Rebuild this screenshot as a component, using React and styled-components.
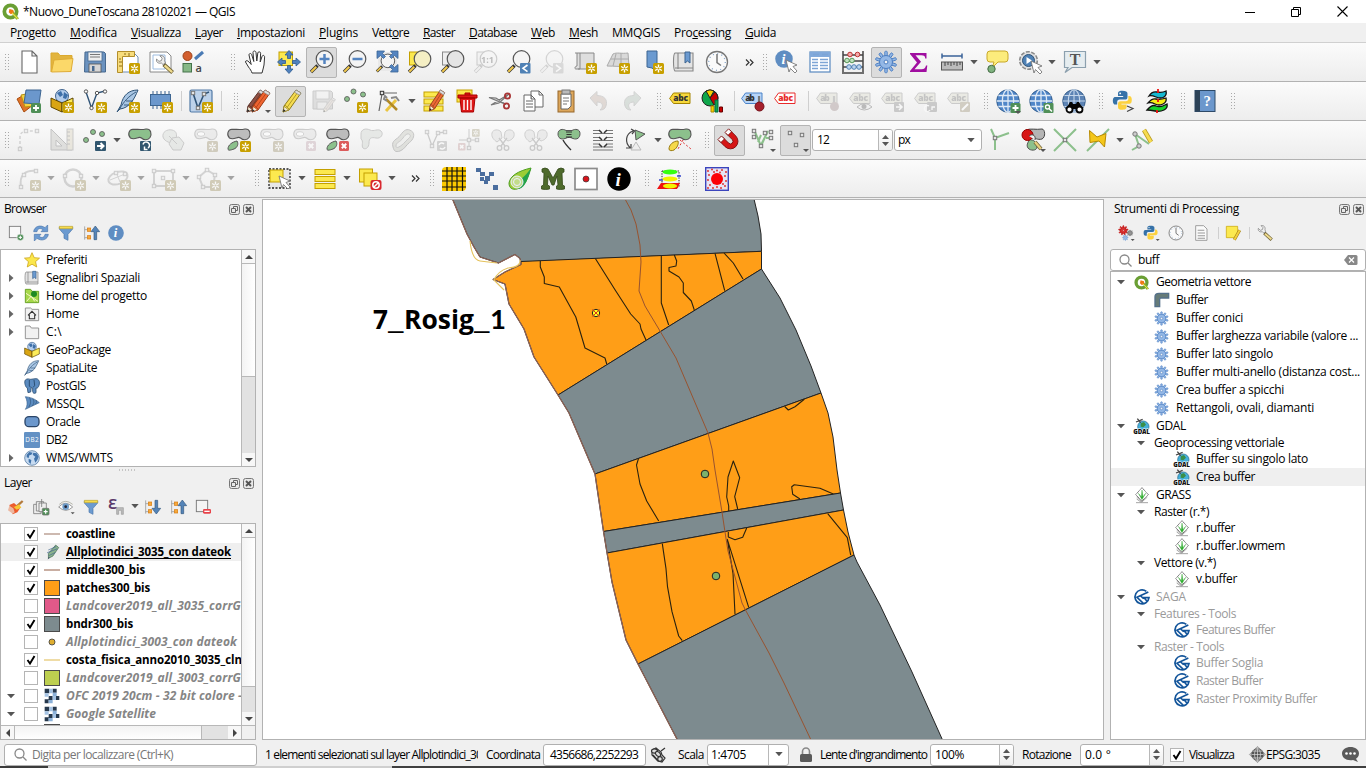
import React, { useLayoutEffect, useRef, useState } from "react";
import styled, { createGlobalStyle, css } from "styled-components";

const Global = createGlobalStyle`
  * { box-sizing: border-box; }
  html, body { margin: 0; padding: 0; }
  body { width: 1366px; height: 768px; overflow: hidden; background: #f0f0f0;
    font-family: "Open Sans", "Noto Sans", sans-serif; font-size: 12px; color: #000; }
  svg { display: block; overflow: visible; }
`;

/* ---------- text ---------- */
const Text = styled.span`
  display: inline-block; flex: none; white-space: pre; line-height: 16px;
  u { text-decoration: underline; text-underline-offset: 1px; text-decoration-thickness: 1px; }
`;
function Label({ w, children, className }) {
  const ref = useRef(null);
  const [gap, setGap] = useState(0);
  useLayoutEffect(() => {
    const el = ref.current;
    el.style.letterSpacing = "0px";
    const n = el.textContent.length;
    const next = w ? (w - el.getBoundingClientRect().width) / n : 0;
    el.style.letterSpacing = next + "px";
    setGap(next);
  }, [w]);
  return <Text ref={ref} className={className} style={{ letterSpacing: gap + "px" }}>{children}</Text>;
}

/* ---------- icon helpers ---------- */
const Ico = ({ s = 24, off, children }) => (
  <svg width={s} height={s} viewBox="0 0 24 24" opacity={off ? 0.45 : 1}>{children}</svg>
);
const Star = ({ x = 13, y = 13, c = "#c8a000" }) => (
  <g transform={`translate(${x} ${y})`}>
    <rect width="11" height="11" rx="1.5" fill={c} />
    <path d="M5.5 1.6v7.8M2.1 3.5l6.8 4M8.9 3.5l-6.8 4" stroke="#fff" strokeWidth="1.4" />
    <circle cx="5.5" cy="5.5" r="1.1" fill={c} />
  </g>
);
const Plus = ({ x = 13, y = 13 }) => (
  <g transform={`translate(${x} ${y})`}>
    <rect width="10" height="10" rx="1.5" fill="#4f8f57" />
    <path d="M5 2v6M2 5h6" stroke="#fff" strokeWidth="1.8" />
  </g>
);
const Del = ({ x = 13, y = 13, c = "#dc5c5c" }) => (
  <g transform={`translate(${x} ${y})`}>
    <rect width="10" height="10" rx="1.5" fill={c} />
    <path d="M2.8 2.8l4.4 4.4M7.2 2.8L2.8 7.2" stroke="#fff" strokeWidth="2" />
  </g>
);
const Pointer = ({ x = 12, y = 10 }) => (
  <path transform={`translate(${x} ${y})`} d="M0 0l11 5-4 1.5 4 4.5-2 2-4.5-4.5L3 12z" fill="#fff" stroke="#777" strokeWidth=".9" />
);
const Tri = ({ x = 18, y = 20 }) => <path d={`M${x} ${y}h6l-3 3z`} fill="#555" />;
const Lens = ({ c = "#f4f4f4", k = "#555" }) => (
  <g>
    <path d="M1 22l6.500-6.500" stroke={k === "#555" ? "#333" : k} strokeWidth="3.400" />
    <path d="M1.300 21.700l5-5" stroke={k === "#555" ? "#f2c94c" : "#eee"} strokeWidth="2" />
    <circle cx="14.500" cy="9" r="8.300" fill={c} stroke={k} strokeWidth="1.200" />
  </g>
);
const Gear = ({ c = "#4d7fc2", f = "#94b8e6", cx = 12, cy = 12, r = 6.5, n = 10 }) => (
  <g transform={`translate(${cx} ${cy})`}>
    {Array.from({ length: n }, (_, i) => (
      <rect key={i} x={-r * 0.19} y={-r * 1.65} width={r * 0.38} height={r * 0.85} rx=".8" fill={f} stroke={c} strokeWidth=".9" transform={`rotate(${(360 / n) * i})`} />
    ))}
    <circle r={r} fill={f} stroke={c} strokeWidth="1" />
    <circle r={r * 0.3} fill="#f4f4f4" stroke={c} strokeWidth="1" />
  </g>
);
const Globe = ({ r = 11, c = "#5c8ec4", f = "#bcd4ee", k = "#345", w = 1.1 }) => (
  <g fill="none" stroke={c} strokeWidth={w}>
    <circle cx="12" cy="12" r={r} fill={f} stroke={k} strokeWidth=".8" />
    <ellipse cx="12" cy="12" rx={r * 0.5} ry={r} />
    <path d={`M12 ${12 - r}v${2 * r}M${12 - r} 12h${2 * r}M${12 - r * 0.85} 6.500h${r * 1.7}M${12 - r * 0.85} 17.500h${r * 1.7}`} />
  </g>
);
const Earth = ({ r = 11 }) => (
  <g>
    <circle cx="12" cy="12" r={r} fill="#c7dbf1" stroke="#3d6591" strokeWidth="1" />
    <path d="M4 7l4-4 5 1-2 3-3 1-1 4-3-1zM14 4l5 1 3 5-2 5-3 4-2-6 2-3-4-3zM7 13l4 2-1 6-3-3z" fill="#4274ab" />
  </g>
);
const Pencil = ({ c = "#f6dc50", k = "#8d7a1a", t = "" }) => (
  <g transform={t}>
    <path d="M17 1l5 3L10 21l-6 2 1-6z" fill={c} stroke={k} strokeWidth="1" />
    <path d="M6 16l4 4M19 3L8 18.500" stroke={k} strokeWidth=".9" opacity=".75" />
    <path d="M17 1l5 3-1.500 2.200-5-3z" fill="#ddd" stroke="#888" strokeWidth=".7" />
    <path d="M4 23l1.200-5.600L9.500 21z" fill="#f3ead2" stroke={k} strokeWidth=".6" />
    <path d="M4 23l.5-3 2 1.800z" fill="#222" />
  </g>
);
const Tag = ({ f = "#f7d83b", k = "#a48300", tc = "#333", t = "abc" }) => (
  <g>
    <path d="M.6 9.500L4.500 4H21v10.500H4.500z" fill={f} stroke={k} strokeWidth="1" />
    <text x="4.200" y="12.400" fontFamily="Open Sans, sans-serif" fontWeight="800" fontSize="8.500" textLength={t === "abc" ? 15 : 9.5} fill={tc}>{t}</text>
  </g>
);
const blob = "M2.500 10C-.5 7 .5 1.500 5 1.200c5 0 8 1 13-.2 5-.5 6 5 4 8.500-2 3-6 2.800-8.500.5-3-2.500-6 2.800-11 0z";
const Blob = ({ f = "#8cc08c", k = "#555" }) => <path d={blob} fill={f} stroke={k} strokeWidth="1.100" />;
const Donut = () => (
  <g><Blob f="#ddd" k="#999" /><ellipse cx="7" cy="6" rx="3.800" ry="2.300" fill="#fff" stroke="#aaa" /></g>
);
const Scissors = ({ f = "#ddd", k = "#999" }) => (
  <g fill="none" stroke={k} strokeWidth="1.300">
    <path d="M1 5c1-4 7-4 9-1l1 6-5 4C3 12 0 9 1 5zM23 5c-1-4-7-4-9-1l-1 6 4 3c4-1 7-4 6-8z" fill={f} strokeWidth=".9" />
    <path d="M8 10l6 8M16 10l-6 8" /><circle cx="8.500" cy="20" r="2.300" /><circle cx="15.500" cy="20" r="2.300" />
  </g>
);
const Python = ({ s = "" }) => (
  <g transform={s}>
    <path d="M12 1c-5 0-5 2-5 4v2h6v1H4C1 8 1 11 1 13s1 4 3 4h2v-3c0-2 1-3 3-3h6c2 0 3-1 3-3V4c0-2-2-3-6-3z" fill="#3672a8" />
    <path d="M12 23c5 0 5-2 5-4v-2h-6v-1h9c3 0 3-3 3-5s-1-4-3-4h-1v3c0 2-1 3-3 3h-6c-2 0-3 1-3 3v4c0 2 2 3 5 3z" fill="#fcd13e" />
    <circle cx="9.500" cy="4" r="1" fill="#fff" />
  </g>
);
const QLogo = ({ s = 16 }) => (
  <svg width={s} height={s} viewBox="0 0 24 24">
    <circle cx="12" cy="12" r="8.700" fill="#fff" stroke="#6a9f34" strokeWidth="5.300" />
    <path d="M12.500 12.500l3-1.500 8.500 11-4 1.500z" fill="#8fb32c" /><path d="M10.500 8.500l5.500 1.500.5 4.500-4 1.500-3-3z" fill="#ee7913" /><path d="M14 14l8 8" stroke="#f0e64a" strokeWidth="1.500" />
  </svg>
);
const yb = { fill: "#fce94f", stroke: "#c4a000", strokeWidth: 1 };
const gp = (pts, k = "#555", f = "#8cc08c") => pts.map(([x, y], i) => <circle key={i} cx={x} cy={y} r="2.500" fill={f} stroke={k} strokeWidth=".8" />);
const sq = (pts, k = "#777") => pts.map(([x, y], i) => <rect key={i} x={x - 1.7} y={y - 1.7} width="3.400" height="3.400" fill="#e4e4e4" stroke={k} strokeWidth="1" />);
const Feather = () => (
  <g><path d="M22 1C13 1 7 6 5 16l-4 7 3-3c9-1 14-9 18-19z" fill="#a9c6e4" stroke="#2f5377" strokeWidth="1" /><path d="M20 3C13 7 8 12 3 21M8 16h6M10 12h7" stroke="#2f5377" strokeWidth=".9" fill="none" /></g>
);
const Box3d = () => (
  <g><circle cx="12" cy="7" r="6.500" fill="#b3cceb" stroke="#41658f" /><path d="M7 4l4-2 2 4-3 2zM14 3l4 3-2 4-3-1z" fill="#3d6fa8" /><path d="M1 9l11 5v9L1 18z" fill="#d9a514" stroke="#5f4700" /><path d="M23 9l-11 5v9l11-5z" fill="#fcec5a" stroke="#5f4700" /></g>
);
const Funnel = () => <g><path d="M2 3h20v3l-7 8v9l-6-3v-6L2 6z" fill="#6b9ad0" stroke="#4a76aa" /><path d="M2 2h20v3.500H2z" fill="#f7dc4c" stroke="#c0a020" strokeWidth=".8" /></g>;
const TreeArrow = ({ down }) => (
  <g><path d="M1 2v20M1 7h5M1 19h5" stroke="#999" strokeWidth="1.200" fill="none" /><rect x="5" y="4.500" width="5" height="5" fill="#f7a93b" stroke="#d87c10" /><rect x="5" y="16" width="5" height="5" fill="#f7a93b" stroke="#d87c10" />
    <path d="M15 22V10h-4.500L17 1.500 23.500 10H19v12z" transform={down ? "rotate(180 17 12)" : ""} fill="#5484b8" stroke="#33587f" strokeWidth="1" /></g>
);
const Info = ({ f = "#5f8dc2" }) => (
  <g><circle cx="12" cy="12" r="11.700" fill={f} /><text x="8.500" y="18.500" fontFamily="Liberation Serif, serif" fontStyle="italic" fontWeight="700" fontSize="19" fill="#fff">i</text></g>
);
const Clock = () => <g fill="none" stroke="#777" strokeWidth="1.300"><circle cx="12" cy="12" r="10.500" fill="#fafafa" /><circle cx="12" cy="12" r="8.300" stroke="#89a8cc" strokeDasharray="1 3.340" /><path d="M12 4v8.500l4 3" strokeWidth="1.500" /></g>;
const Wrench = () => (
  <g><path d="M11 12l11 10" stroke="#6d6034" strokeWidth="5" /><path d="M12 13l9.500 8.500" stroke="#efdb8e" strokeWidth="3" /><path d="M2 5l3 3 3-1 1-3-3-3c4-1 7 2 6 6l1 3-3 2-2-2C4 11 1 9 2 5z" fill="#eee" stroke="#777" /></g>
);

/* ---------- icons ---------- */
const I = {
  doc: <path d="M5 1h10l5 5v17H5zM15 1v5h5" fill="#fff" stroke="#666" strokeWidth="1.100" />,
  folder: <g><path d="M1 22V3h7l2 2.500h12V10" fill="#e2b43e" stroke="#dba92f" /><path d="M1.500 22l2.500-12 19-1.500L21 21.500z" fill="#fbd869" stroke="#dfac35" /></g>,
  save: <g><path d="M2 2h19l1.500 1.500V22h-21z" fill="#6b92bf" stroke="#47698f" /><rect x="5" y="2" width="14" height="9" fill="#eee" stroke="#47698f" strokeWidth=".8" /><path d="M7 4.500h10M7 7h10" stroke="#777" strokeWidth="1.200" /><rect x="6" y="14" width="12" height="8" fill="#d6d6d6" stroke="#555" strokeWidth=".8" /><rect x="9" y="16" width="2.500" height="5" fill="#47698f" /></g>,
  saveoff: <g><path d="M1 2h18l1.500 1.500V20H1z" fill="#c4c4c4" stroke="#999" /><rect x="4" y="2" width="13" height="8" fill="#eee" stroke="#999" strokeWidth=".8" /><rect x="5" y="13" width="10" height="7" fill="#e4e4e4" stroke="#999" strokeWidth=".8" /><g transform="translate(9 8) scale(.65)"><Pencil c="#d9cfc8" k="#999" /></g></g>,
  layoutNew: <g><path d="M3 3h15l4 4v15H3z" fill="#fff" stroke="#6e8db0" /><path d="M1.500 1.500h17v5h-12v16h-5z" fill="#f7dc7c" stroke="#b38e2b" /><path d="M4 8v2M3 12h3M3 16h3M9 3v2M13 3v3" stroke="#8c6d18" /><Star /></g>,
  layoutMgr: <g><path d="M1 2h17l4 4v16H1z" fill="#fff" stroke="#888" /><path d="M4 5h12v14H4z" fill="none" stroke="#9dbce0" /><g transform="translate(6 5) scale(.8)"><Wrench /></g></g>,
  style: <g><circle cx="6.500" cy="6" r="4.500" fill="#d35f2f" stroke="#9c4118" /><path d="M14 9l8-7" stroke="#4a7bb5" strokeWidth="3" /><rect x="2" y="13.500" width="8.500" height="8.500" fill="#86b886" stroke="#44734a" /><text x="14.500" y="21.500" fontFamily="Open Sans, sans-serif" fontWeight="600" fontSize="11" fill="#444">a</text></g>,
  hand: <path d="M8 23c-.5-2-2-4-3.500-6L1.500 12c0-1.800 2-1.800 3.500 0l2.200 2.500L5 5c0-2 2.500-2 2.800 0l2 6.500L9 2.500c0-2 2.800-2 3 0l.8 8.500 1-8c.2-1.800 2.800-1.500 2.800.3L16.200 12l1.800-5.500c.6-1.800 2.800-1.200 2.600.6L20 15c-.3 3-1.500 5-2 8z" fill="#fff" stroke="#333" strokeWidth="1" />,
  pan: <g><rect x="2" y="2" width="13.500" height="13.500" {...yb} /><path d="M12 .5l4 4.500h-2.500v3.500h-3V5H8zM12 23.500L8 19h2.500v-3.500h3V19H16zM.5 12L5 8v2.500h3.500v3H5V16zM23.500 12L19 16v-2.500h-3.500v-3H19V8z" fill="#4f81bd" stroke="#2e5c91" strokeWidth=".8" /></g>,
  zin: <g><Lens /><path d="M14.500 4v10M9.500 9h10" stroke="#5484c0" strokeWidth="2.500" /></g>,
  zout: <g><Lens /><path d="M9.500 9h10" stroke="#5484c0" strokeWidth="2.500" /></g>,
  zfull: <g><rect x="3" y="2" width="19" height="19" fill="#e9e9e9" /><g transform="translate(1 3.500) scale(.82)"><Lens /></g><path d="M2 1h7.500L7.500 3.500l3 3-2 2-3-3L2 8.500zM23 1h-7.500l2 2.500-3 3 2 2 3-3L23 8.500zM23 22h-7.500l2-2.500-3-3 2-2 3 3 3.500-3z" fill="#5484c0" stroke="#3a6596" strokeWidth=".8" /></g>,
  zsel: <g><rect x="1.500" y="2" width="12" height="13" {...yb} /><Lens c="#f5efc4" /></g>,
  zlay: <g><rect x="1.500" y="2" width="12" height="13" fill="#eee" stroke="#888" /><Lens c="#e4e4e4" /></g>,
  z11: <g><rect x="3" y="2" width="14" height="13" fill="#eee" stroke="#999" /><Lens k="#999" /><text x="7" y="12.500" fontFamily="Open Sans, sans-serif" fontWeight="700" fontSize="9" fill="#777">1:1</text></g>,
  zlast: <g><Lens /><rect x="13" y="13" width="10.500" height="10.500" rx="1" fill="#4f81b5" /><path d="M20.500 15l-4.500 3.300 4.500 3.300" stroke="#fff" strokeWidth="1.600" fill="none" /></g>,
  znext: <g><Lens k="#aaa" /><rect x="13" y="13" width="10.500" height="10.500" rx="1" fill="#bbb" /><path d="M16 15l4.500 3.300-4.500 3.300" stroke="#fff" strokeWidth="1.600" fill="none" /></g>,
  newmap: <g><path d="M2 3h5v16H3C1 19 2 16 4 16V3M7 3h14v16H5" fill="#dedede" stroke="#888" /><Star /></g>,
  new3d: <g><path d="M1 16L7 4c4-2 8 0 15-1l1 13c-7 1-15 0-22 0zM5 9h17M10 4L7 16M15 3v13" fill="#d9d9d9" stroke="#aaa" /><Star /></g>,
  bmnew: <g><path d="M7 1h10v21l-5-4-5-1z" fill="#6b9ad0" stroke="#3d6591" /><Star /></g>,
  bm: <g><path d="M3 3h18v18H3C1 19 1 4 3 3zM6 3v16M3 18h18" fill="#e4e4e4" stroke="#888" strokeWidth="1.100" /><path d="M13 2h5v11l-2.500-2L13 13z" fill="#6b9ad0" stroke="#3d6591" /></g>,
  clock: <Clock />,
  ident: <g><g transform="translate(0 0) scale(.75)"><Info /></g><Pointer x={11} y={10} /></g>,
  table: <g><rect x="2" y="2" width="20" height="20" fill="#fff" stroke="#6491c4" strokeWidth="1.300" /><rect x="2" y="2" width="20" height="5" fill="#82aadb" /><path d="M5 4.500h6M14 4.500h6M4 9.500h6M12 9.500h8M4 12.500h6M12 12.500h8M4 15.500h6M12 15.500h8M4 18.500h6M12 18.500h8" stroke="#7da5d5" strokeWidth="1.300" /></g>,
  abacus: <g fill="none"><path d="M2 1v21M22 1v21M1 23h22M2 5h20M2 11h20M2 17h20" stroke="#444" strokeWidth="1.500" /><g strokeWidth="1"><g fill="#f4aaaa" stroke="#b33"><circle cx="9" cy="4.500" r="2.300" /><circle cx="16.500" cy="4.500" r="2.300" /></g><g fill="#bfe0bf" stroke="#5a9a5a"><circle cx="6" cy="10.500" r="2.300" /><circle cx="11" cy="10.500" r="2.300" /></g><g fill="#bcd4ee" stroke="#4f81b5"><circle cx="8" cy="17" r="2.300" /><circle cx="13" cy="17" r="2.300" /><circle cx="18" cy="17" r="2.300" /></g></g></g>,
  gear: <Gear />,
  sigma: <path d="M3 3h16.500v5.500h-1.300c0-2.300-1-3.300-4-3.300H8.500l5.500 6.500-6.500 7.600h7c3 0 4-1.800 4.500-3.800h1.300L19.500 22H3v-1l7-8.500-7-8.500z" fill="#a00ea0" />,
  measure: <g><path d="M2 6h20M2 3.500v5M22 3.500v5" stroke="#3b6399" strokeWidth="1.500" /><rect x="1.500" y="12" width="21" height="8" fill="#bcbcbc" stroke="#555" /><path d="M5 12v4M8 12v3M11 12v4M14 12v3M17 12v4M20 12v3" stroke="#444" /></g>,
  tip: <g><path d="M5 1h15q3 0 3 3v5q0 3-3 3h-7l-6 6 2-6H5q-3 0-3-3V4q0-3 3-3z" fill="#fcec7c" stroke="#c8a828" /><circle cx="6.500" cy="19" r="3.700" fill="#7fb37f" stroke="#446b44" /></g>,
  action: <g><circle cx="10.500" cy="10.500" r="8.800" fill="#e2e2e2" stroke="#8a8a8a" strokeWidth="1.600" strokeDasharray="4 1.500" /><circle cx="10.500" cy="10.500" r="6" fill="#4f81b5" stroke="#2f5377" /><path d="M8.500 7l5.500 3.500L8.500 14z" fill="#fff" /><Pointer x={13} y={11} /></g>,
  textann: <g><path d="M1.500 1.500h21v16H9l-7 5 3-5H1.500z" fill="#e6edf0" stroke="#8ca0ae" strokeWidth="1.200" /><text x="6.800" y="15" fontFamily="Liberation Serif, serif" fontWeight="700" fontSize="16" fill="#555">T</text></g>,
  dsm: <g><path d="M0 10l10-6 6 12-9 7z" fill="#e07428" stroke="#a84c10" /><path d="M4 6l10-2 3 13-9 1z" fill="#f5d040" stroke="#b99413" /><path d="M9 1h15l-2 14-15-1z" fill="#6b97cc" stroke="#3d6591" /><Plus x={14} y={14} /></g>,
  gpkg: <g><Box3d /><Star /></g>,
  shp: <g><path d="M3 3l5.500 16L14 4l8-2" fill="none" stroke="#2f5377" strokeWidth="1.400" />{[[3, 2.5], [8.5, 19], [14, 4], [22, 2.5]].map(([x, y], i) => <circle key={i} cx={x} cy={y} r="1.700" fill="#fff" stroke="#444" strokeWidth=".9" />)}<Star /></g>,
  spl: <g><Feather /><Star /></g>,
  mem: <g><path d="M4 2v18M8 2v18M12 2v18M16 2v18M20 2v18" stroke="#38618f" /><rect x="1.500" y="5.500" width="20" height="11" fill="#6b97cc" stroke="#3d6591" /><Star /></g>,
  virt: <g><rect x="1" y="1" width="22" height="22" rx="1.500" fill="#bdd2ea" stroke="#5079a5" strokeWidth="1.200" /><path d="M4 4l5 15L15 5l5-2" fill="none" stroke="#2f5377" strokeWidth="1.600" />{sq([[4, 4], [9, 19], [15, 5]])}<Star /></g>,
  pencils: <g><Pencil c="#8f5044" k="#5c3328" t="translate(-3 0)" /><Pencil c="#ef6430" k="#9c3a14" t="translate(2 0)" /><Tri x={19} y={21} /></g>,
  pencil: <Pencil />,
  addpt: <g>{gp([[3, 10], [9.5, 2.5], [19, 5.5]])}<Star /></g>,
  vertex: <g><path d="M2 22L5 5M6 4h14" stroke="#666" strokeWidth="1.200" />{sq([[5, 4]], "#333")}<path d="M9 22L19 11" stroke="#eac540" strokeWidth="3" /><path d="M9 10l11 11" stroke="#b28a25" strokeWidth="2.500" /><path d="M10 12l-3-2 1-3 2 2M14 9l5-1 3 4" stroke="#888" strokeWidth="2" fill="none" /></g>,
  multi: <g><rect x="2" y="3" width="19" height="5" {...yb} /><rect x="2" y="10" width="19" height="5" {...yb} /><rect x="2" y="17" width="19" height="5" {...yb} /><g transform="translate(4 0)"><Pencil c="#ee6a35" k="#8d3a18" t="scale(.85 .95)" /></g></g>,
  trash: <g><rect x="2" y="1" width="15" height="12" {...yb} /><path d="M3 6h19v3H3zM10 6V4h5v2M5 9h15l-1.500 14h-12z" fill="#e01818" stroke="#a80000" /><path d="M9 11v10M12.500 11v10M16 11v10" stroke="#fff" strokeWidth="1.400" /></g>,
  cut: <g><path d="M1 8.500l17 7L8 9zM3 16L21 5 11 14z" fill="#ccc" stroke="#777" strokeWidth="1.100" /><circle cx="19.500" cy="7" r="2.600" fill="none" stroke="#a93636" strokeWidth="1.800" /><circle cx="18.500" cy="17" r="2.600" fill="none" stroke="#a93636" strokeWidth="1.800" /></g>,
  copy: <g fill="#fff" stroke="#666"><path d="M10 2h8l4 4v12H10zM18 2v4h4" /><path d="M3 6h7l4 4v12H3zM10 6v4h4M5 12h7M5 15h7M5 18h7" /></g>,
  paste: <g><rect x="4" y="2" width="16" height="21" fill="#dca65b" stroke="#96672a" /><path d="M7 5h10v12l-3 3H7z" fill="#fff" stroke="#666" /><rect x="8" y="1" width="8" height="4" fill="#bbb" stroke="#777" /><path d="M9 9h6M9 12h6M9 15h4" stroke="#777" /></g>,
  undo: <path d="M3 9l7-6.500v4c7 0 11 4 9 10.500-1 3-3 4-6 4 4-3.500 3-8-3-8v4z" fill="#c9b9b0" stroke="#aaa" />,
  redo: <path d="M21 9l-7-6.500v4c-7 0-11 4-9 10.500 1 3 3 4 6 4-4-3.500-3-8 3-8v4z" fill="#b9c6bd" stroke="#aaa" />,
  tag: <Tag />,
  pie: <g><circle cx="9" cy="9" r="8" fill="#0fa64b" stroke="#222" /><path d="M9 9L5 2a8 8 0 018 0z" fill="#f5d000" stroke="#222" /><path d="M9 9l5-6a8 8 0 01-1 13z" fill="#c80000" stroke="#222" /><path d="M10 23v-6h3v6z" fill="#f5d000" stroke="#a80" /><path d="M14 23V11h3v12z" fill="#0fa64b" stroke="#064" /><path d="M18.500 23v-5h3v5z" fill="#c80000" stroke="#600" /></g>,
  tagpin: <g><Tag f="#b8d5f8" k="#4a83c8" t="ab" /><path d="M18 14V7" stroke="#777" strokeWidth="2.200" /><circle cx="18.500" cy="17.500" r="4.500" fill="#a51f2b" stroke="#741019" /></g>,
  tagred: <Tag f="#fff" k="#e82a2a" tc="#e82a2a" />,
  tagp: <g><Tag f="#dcdccf" k="#999" tc="#888" t="ab" /><path d="M18 14V7" stroke="#999" strokeWidth="2.200" /><circle cx="18.500" cy="17.500" r="4.500" fill="#a99" /></g>,
  tageye: <g><Tag f="#dcdccf" k="#999" tc="#888" /><path d="M8 18q8-7 15 0-8 6-15 0z" fill="#eee" stroke="#777" /><circle cx="15" cy="17.500" r="2.500" fill="#777" /></g>,
  tagarr: <g><Tag f="#dcdccf" k="#999" tc="#888" /><rect x="13" y="13" width="10" height="10" rx="1" fill="#999" /><path d="M15 18h6M18 15l3 3-3 3" stroke="#fff" strokeWidth="1.500" fill="none" /></g>,
  tagrot: <g><Tag f="#dcdccf" k="#999" tc="#888" /><rect x="13" y="13" width="10" height="10" rx="1" fill="#999" /><path d="M16 21a3 3 0 11-1-4M18 21v-3h3" stroke="#fff" strokeWidth="1.300" fill="none" /></g>,
  tagedit: <g><Tag f="#dcdccf" k="#999" tc="#888" /><rect x="13" y="13" width="10" height="10" rx="1" fill="#aaa18a" /><path d="M15 21l6-6" stroke="#fff" strokeWidth="2" /></g>,
  wms: <g><Globe r={11.3} c="#dfeaf6" f="#4f86c8" k="#27507f" w={1.3} /><Plus x={14.5} y={14} /><Tri x={19} y={22} /></g>,
  wmsz: <g><Globe r={11.3} c="#dfeaf6" f="#4f86c8" k="#27507f" w={1.3} /><rect x="14.500" y="14" width="10" height="10" rx="1" fill="#4f8f57" /><circle cx="18.500" cy="18" r="2" fill="none" stroke="#fff" strokeWidth="1.300" /><path d="M20 19.500l3 3" stroke="#fff" strokeWidth="1.500" /></g>,
  bino: <g><Globe r={11.3} c="#c4d6ea" f="#5d84b5" k="#27507f" /><path d="M4 20l4-7h2l1 2h3l1-2h2l4 7z" fill="#050505" /><circle cx="7.500" cy="20.500" r="3" fill="#fff" stroke="#050505" strokeWidth="1.800" /><circle cx="17.500" cy="20.500" r="3" fill="#fff" stroke="#050505" strokeWidth="1.800" /></g>,
  py: <g><Python s="translate(1 1) scale(.86)" /><path d="M16 17l6 2.500-6 3" fill="none" stroke="#444" strokeWidth="1.200" /></g>,
  layers3: <g strokeWidth="1.300" stroke="#111"><path d="M4 7q3-5 8-4t9-1q1 4-2 6t-8 0-7-1z" fill="#16b8d0" /><path d="M3 14q4-5 8-4t10-1q1 4-3 6t-8 0-7-1z" fill="#f6ee15" /><path d="M2 21q5-6 9-4t11-2q1 4-3 6t-9 1-8-1z" fill="#17d22b" /><path d="M13 0v4M13 10v3M12 21v3" stroke="#e11" strokeWidth="1.800" /></g>,
  help: <g><rect x="2" y="1.500" width="20" height="21" fill="#6b97cc" stroke="#2e4a68" /><rect x="2" y="1.500" width="5" height="21" fill="#2d4358" /><text x="10.500" y="17" fontFamily="Liberation Serif, serif" fontSize="15" fontWeight="700" fill="#fff">?</text></g>,
  arc: <g><path d="M3 21V9q0-5 6-6h11" fill="none" stroke="#aaa" strokeWidth="1.500" strokeDasharray="3 2" />{sq([[3, 21], [9, 3], [20, 3]], "#999")}</g>,
  cad: <g><path d="M1 1v21h21zM6 12v6h6z" fill="#c8c8c4" stroke="#888" fillRule="evenodd" /><rect x="17" y="1" width="6" height="21" fill="#ddd7c4" stroke="#999" /><path d="M17 4h3M17 8h3M17 12h3M17 16h3" stroke="#888" /></g>,
  movept: <g>{gp([[3, 12], [10, 4], [19, 6]])}<rect x="12" y="13" width="11" height="10" rx="1" fill="#31566f" /><path d="M14 18h6M17.500 15l3 3-3 3" stroke="#fff" strokeWidth="2" fill="none" /></g>,
  rotf: <g><Blob /><rect x="12" y="13" width="11" height="10" rx="1" fill="#31566f" /><path d="M15 16.500a3.300 3.300 0 115 3.500M16.500 18.500v3h3" stroke="#fff" strokeWidth="1.500" fill="none" /></g>,
  simp: <g fill="#d8dcd8" stroke="#999"><path d="M2 9c-1-5 4-8 9-7s5 5 4 9-6 4-8 3-4-2-5-5z" /><path d="M11 10l7-1 5 6-3 7h-8l-4-6zM8 8l8 8" /></g>,
  ring: <g><Donut /><Star c="#a99f80" /></g>,
  part: <g><Blob f="#bcbcbc" /><path d="M1 21c0-4 4-7 9-8 2 3 0 7-3 8s-6 2-6 0z" fill="#8cc08c" stroke="#555" /><Star /></g>,
  ringdel: <g><Donut /><Del c="#c9b0b8" /></g>,
  partdel: <g><Blob f="#bcbcbc" /><path d="M1 21c0-4 4-7 9-8 2 3 0 7-3 8s-6 2-6 0z" fill="#8cc08c" stroke="#555" /><Del /></g>,
  reshape: <path d="M2 6c0-5 5-6 9-4s8-2 11 1 0 8-5 7-7 0-7 5-4 7-6 5 1-7-2-9z" fill="#d3d8d3" stroke="#999" />,
  offset: <g><path d="M2 19C0 12 6 12 9.500 7S16 0 20.500 3s1.500 9-2 11.500-5 7-9.500 8.500-6 0-7-4z" fill="#c8cac2" stroke="#888" /><path d="M5 18c0-4 4-3.500 7-8s5.500-5 7-3-2.500 4-5 7-9 8-9 4z" fill="#e8eae6" stroke="#999" /></g>,
  split: <Scissors />,
  vrefresh: <g><path d="M3 4l5 14 6-13 7-1" fill="none" stroke="#999" strokeWidth="1.300" />{sq([[3, 4], [8, 18], [14, 5], [21, 4]], "#999")}<rect x="13" y="13" width="10" height="10" rx="1" fill="#aaa" /><path d="M15 17a3 3 0 015-1M21 19a3 3 0 01-5 1" stroke="#fff" strokeWidth="1.500" fill="none" /></g>,
  vcross: <g><path d="M12 1v21M2 12h20" stroke="#999" />{sq([[12, 12], [12, 20], [20, 12]], "#999")}<g transform="translate(15 1) scale(.7)"><Star x={0} y={0} c="#b0aa90" /></g><g transform="translate(1 15) scale(.75)"><Del x={0} y={0} c="#caa" /></g></g>,
  merge: <g><path d="M1 6c0-5 5-5.500 8-3.500h6c3-2 8-1.500 8 3S20 12 16 10.500c-3-1.500-4.500-1.500-8 0C4 12 1 10 1 6z" fill="#8cc08c" stroke="#555" /><path d="M9 4h6M9.500 6.500h5M9 9h6" stroke="#333" strokeWidth="1.200" /><path d="M6 12c2 4 4 6 8 10" stroke="#333" strokeWidth="1.400" fill="none" /></g>,
  mergeattr: <g stroke="#777" fill="none"><path d="M2 2.500h7M15 2.500h7M2 5.500h20M2 9.500h7M15 9.500h7M2 12.500h20M2 16h7M15 16h7M2 19h20M2 22h20" /><path d="M8 2l3 3M16 2l-3 3M8 9l3 3M16 9l-3 3M8 16l3 3M16 16l-3 3" stroke="#333" strokeWidth="1.500" /></g>,
  rotsym: <g><path d="M11 2l10 4-9 6z" fill="#8cc08c" stroke="#555" /><path d="M12 14l5 8H7z" fill="#eee" stroke="#bbb" /><path d="M9 3C1 6 1 15 6 19.500M2 20h5v-4M7 1l3.500 2L8 6" fill="none" stroke="#444" strokeWidth="1.200" /></g>,
  trim: <g><Blob /><path d="M1 21c0-4 4-8 9-8 1 3-1 7-4 9-2 1-5 1-5-1z" fill="#f5d94a" stroke="#9a7b10" /><path d="M12 12l11 9M15 12l-5 9" stroke="#d33" strokeWidth="1" strokeDasharray="2 2" /></g>,
  magnet: <g transform="rotate(-45 12 12) translate(2 3) scale(.84)"><path d="M3 3v10a9 9 0 0018 0V3h-6v10a3 3 0 01-6 0V3z" fill="#d61515" stroke="#7c0b0b" /><path d="M3 1h6v5H3zM15 1h6v5h-6z" fill="#fff" stroke="#7c0b0b" /></g>,
  snapall: <g><path d="M4 4l6 14 5-11M10 7l-3 7M17 3l-7 14M15 10h6" stroke="#8cc08c" strokeWidth="2" fill="none" />{sq([[3, 3], [3, 9], [14, 5], [20, 4], [20, 10], [10, 18]])}<Tri x={19} y={21} /></g>,
  snapv: <g>{sq([[6, 5], [18, 7], [12, 17]])}<Tri x={19} y={21} /></g>,
  topo: <g><path d="M3 1l4 9 14-5M7 10v12" stroke="#8cc08c" strokeWidth="2" fill="none" />{sq([[7, 10]])}</g>,
  overlap: <g><path d="M5 2c4-2 10 0 16-1 3 0 4 8 0 10-5 1.500-7-2-9 0z" fill="#b5b5b5" stroke="#444" /><path d="M8 12c5-1 8 3 8 7s-7 4-9 1 0-5 1-8z" fill="#8cc08c" stroke="#555" /><circle cx="6.500" cy="7" r="5.500" fill="#d81616" stroke="#900" /><path d="M8 8c4-3 7 0 6 4" fill="#eee" stroke="#444" /><path d="M14 14l6 7" stroke="#6d5f34" strokeWidth="3.800" /><path d="M14 14l6 7" stroke="#e8cf7e" strokeWidth="2.400" /><Tri x={19} y={21} /></g>,
  inter: <g><path d="M1 1l22 22M23 1L1 23" stroke="#8cc08c" strokeWidth="2" />{sq([[12, 12]])}</g>,
  trace: <g><path d="M1 23L23 1" stroke="#8cc08c" strokeWidth="2" /><path d="M3.500 2.500L11 9l9-3.500L18.500 19 13 13l-9 1.500z" fill="#f4c61a" stroke="#b78a00" /></g>,
  selfsnap: <g><path d="M1 22l7-4L4 6l14 10" stroke="#8cc08c" strokeWidth="2" fill="none" /><circle cx="4" cy="6" r="2.200" fill="#ccc" stroke="#777" /><circle cx="8" cy="18" r="2.200" fill="#ccc" stroke="#777" /><path d="M13 2l7 12" stroke="#b89a20" strokeWidth="4.500" /><path d="M13 2l7 12" stroke="#f6dc50" strokeWidth="3" /></g>,
  sarc: <g><path d="M4 20C2 8 8 3 19 4" fill="none" stroke="#aaa" strokeWidth="2" />{sq([[4, 20], [7, 8], [19, 4]], "#999")}<Star c="#a89c70" /></g>,
  scirc: <g><circle cx="11" cy="11" r="8.500" fill="none" stroke="#aaa" strokeWidth="2.500" />{sq([[3, 9], [19, 9]], "#999")}<Star c="#a89c70" /></g>,
  sell: <g><ellipse cx="11" cy="11" rx="10" ry="6" transform="rotate(-20 11 11)" fill="none" stroke="#aaa" strokeWidth="2" /><path d="M3 13L18 7M9 5l4 10" stroke="#aaa" />{sq([[9, 6], [18, 7]], "#999")}<Star c="#a89c70" /></g>,
  srect: <g><rect x="2" y="4" width="19" height="15" fill="none" stroke="#aaa" strokeWidth="2" />{sq([[2, 4], [21, 4], [2, 19], [11, 11]], "#999")}<Star c="#a89c70" /></g>,
  spoly: <g><path d="M2 10l8-7 8 5-2 12H6z" fill="none" stroke="#aaa" strokeWidth="2" />{sq([[2, 10], [10, 3], [18, 8], [6, 20]], "#999")}<Star c="#a89c70" /></g>,
  select: <g><rect x="1" y="2" width="21" height="19" fill="#e7e7e7" stroke="#222" strokeDasharray="2 1.500" strokeWidth="1.300" /><rect x="2" y="3" width="13" height="12" {...yb} /><Pointer x={11} y={9} /></g>,
  selval: <g><rect x="2" y="2.500" width="20" height="5" {...yb} /><rect x="2" y="9.500" width="20" height="5" {...yb} /><rect x="2" y="16.500" width="20" height="5" {...yb} /></g>,
  desel: <g><rect x="1.500" y="2" width="13" height="13" {...yb} /><rect x="6" y="6" width="13" height="13" {...yb} /><rect x="12.500" y="13" width="11" height="10" rx="2" fill="#d8282f" /><circle cx="18" cy="18" r="3.200" fill="none" stroke="#fff" strokeWidth="1.500" /><path d="M15.500 20.500l5-5" stroke="#fff" strokeWidth="1.500" /></g>,
  grid: <g><path d="M4 0h20v20q0 4-4 4H0V4q0-4 4-4z" fill="#fbc900" /><path d="M5 0v24M10 0v24M15 0v24M20.500 0v24M0 4h24M0 9h24M0 14h24M0 20h24" stroke="#111" strokeWidth="1.200" /></g>,
  pix: <path d="M1 1h5v4H1zM5 5h5v4H5zM14 5h5v4h-5zM10 9h5v5h-5zM5 10h4v4H5zM9 13h4v4H9zM18 18h5v5h-5z" fill="#4a6d9e" />,
  leaf: <g><path d="M23 1C10 4 2 9 1 16c0 5 3 7 8 6C17 20 20 11 23 1z" fill="#9ccd35" stroke="#4c9d20" /><path d="M23 1c-4 6-9 11-13 13l1 8c7-2 9-11 12-21z" fill="#24a34b" /><circle cx="9" cy="15" r="6" fill="#c3dd8a" stroke="#eef" /><circle cx="9" cy="15" r="3.500" fill="none" stroke="#eef" /></g>,
  emm: <path d="M1 2q3-2 6 0l5 9 5-9q3-2 6 0v3l-2 1 .5 12 2 1v3q-4 1-8 0v-3l1.500-1L16 9l-3 9h-2L7 9l-.5 9 2 1v3q-4 1-8 0v-3l2-1L3 6 1 5z" fill="#4e6a2c" stroke="#33491b" strokeWidth=".8" />,
  reddot: <g><rect x="1" y="1.500" width="22" height="21" fill="#fff" stroke="#8c8c8c" strokeWidth="1.700" /><circle cx="12" cy="12" r="3" fill="#d8141c" stroke="#333" strokeWidth=".7" /></g>,
  infob: <Info f="#000" />,
  stack: <g><rect x="5" y="4" width="17" height="16" fill="none" stroke="#222" strokeDasharray="1.300 1.300" /><path d="M0 22l4-6h19l-3 6z" fill="#e11" /><path d="M2 13h4M20 9h4" stroke="#34c" strokeWidth="1.500" /><ellipse cx="13" cy="5" rx="7.500" ry="2.500" fill="#35ff10" /><ellipse cx="13" cy="12" rx="7.500" ry="2.500" fill="#f3f300" /><ellipse cx="13" cy="19" rx="7" ry="2.500" fill="#f3f300" /></g>,
  heat: <g><rect x=".7" y=".7" width="22.600" height="22.600" fill="#e6e4f4" stroke="#3c45bd" strokeWidth="1.400" /><circle cx="12" cy="12" r="6" fill="#fb0007" />{[[3, 4], [7, 2.5], [12, 3.5], [17, 3], [21, 5], [4, 8], [20, 9], [3, 13], [21, 14], [5, 18], [8, 21], [12, 20], [16, 21], [20, 19], [3, 21], [9, 5], [15, 5.5], [18, 17]].map(([a, b], i) => <circle key={i} cx={a} cy={b} r=".9" fill="#d22" />)}</g>,
  addsq: <g><rect x="2" y="2" width="17" height="17" fill="#f8f8f8" stroke="#777" strokeWidth="1.300" /><circle cx="18.500" cy="18.500" r="5" fill="#4f8f57" stroke="#f0f0f0" /><path d="M18.500 16v5M16 18.500h5" stroke="#fff" strokeWidth="1.500" /></g>,
  refresh: <path d="M1 10C2 2 11-1 18 4l4-4v10H12l3-3C11 4 7 5 6 10zM23 14c-1 8-10 11-17 6l-4 4V14h10l-3 3c4 3 8 2 9-3z" fill="#6c9bd2" stroke="#4a76aa" />,
  funnel: <Funnel />, collapse: <TreeArrow />, expand: <TreeArrow down />, info: <Info />,
  brush: <g><path d="M13 11l9-8" stroke="#b37a3b" strokeWidth="3.500" /><path d="M2 9l7-3 9 8-4 6-7 3z" fill="#ec5a2c" /><path d="M4 8l5 4 8-4 3 5-7 3z" fill="#f7c632" /><path d="M2 10l6 4 2 6-3 2-7-5z" fill="#ecb7a0" /></g>,
  addgrp: <g fill="#eee" stroke="#777" strokeWidth="1.200"><path d="M1 8h11v14H1z" /><path d="M5 4h11v14H5z" /><path d="M9 6h11v13H9zM13 0v12" /><Plus x={14} y={14} /></g>,
  eye: <g><path d="M1 12Q11 1 22 12 12 22 1 12z" fill="#fff" stroke="#888" strokeWidth="1.300" /><circle cx="11.500" cy="11.500" r="5" fill="#6d9cc9" /><circle cx="11.500" cy="11.500" r="2" fill="#223" /><path d="M2 8q9-9 20 0" stroke="#998" fill="none" /><Tri x={19} y={20} /></g>,
  eps: <g><text x="0" y="14.500" fontFamily="Open Sans, sans-serif" fontWeight="600" fontSize="27" fill="#5b3a6b">ε</text><path d="M13 23V13h10v10h-3v-6h-4v6z" fill="#bbb" stroke="#999" /></g>,
  rmsq: <g><rect x="2" y="2" width="17" height="17" fill="#f4f4f4" stroke="#777" strokeWidth="1.400" /><rect x="12" y="15" width="12" height="7" rx="2" fill="#e8434a" /><path d="M14 18.500h8" stroke="#fff" strokeWidth="2" /></g>,
  gears: <g><Gear c="#b11" f="#d33" cx={8} cy={8} r={4.3} n={9} /><Gear c="#777" f="#999" cx={18} cy={12} r={2.8} n={8} /><Gear c="#7aa3d8" f="#a8c5ea" cx={11} cy={19} r={2.6} n={8} /><Tri x={19} y={21} /></g>,
  pysm: <g><Python s="scale(.95)" /><Tri x={19} y={21} /></g>,
  rep: <g><path d="M4 1h12l5 5v17H4z" fill="#fafafa" stroke="#999" strokeWidth="1.400" /><path d="M7 8h10M7 12h11M7 16h11M7 20h11" stroke="#999" strokeWidth="1.600" /></g>,
  note: <g><path d="M2 2h17v13l-4 4H2z" {...yb} /><path d="M22 8l-8 14" stroke="#a07e10" strokeWidth="4.500" /><path d="M22 8l-8 14" stroke="#f3cf3c" strokeWidth="3" /></g>,
  wrench: <Wrench />,
  star: <path d="M12 1l3.300 7.500 8 .7-6 5.300 1.800 8L12 18.300 4.900 22.500l1.800-8-6-5.300 8-.7z" fill="#fbe74c" stroke="#cba51a" strokeWidth="1.200" />,
  prj: <g><path d="M2 2h8l2 3h10v17H2z" fill="#a6d84a" stroke="#5f9a1e" strokeWidth="1.300" /><path d="M4 20l7-8 5 8M3 8l18 12" stroke="#f6f6c8" strokeWidth="1.500" fill="none" /><circle cx="15" cy="9" r="4.500" fill="#1e8a24" /></g>,
  homef: <g><path d="M2 3h8l2 2h10v17H2z" fill="#f1f1f1" stroke="#888" strokeWidth="1.300" /><path d="M6 14l6-6 6 6M8 13v6h8v-6" fill="none" stroke="#333" strokeWidth="1.600" /></g>,
  dir: <path d="M2 3h7l2 3h11v16H2z" fill="#f1f1f1" stroke="#888" strokeWidth="1.300" />,
  box: <Box3d />, feather: <Feather />,
  pg: <g><path d="M2 3c3-3 6-1 8-1s5-1 8-1 6 3 5 8-3 7-5 6v7c-2 2-5 1-5-2v-5l-2-1-1 7-4 1-1-7C2 14 0 6 2 3z" fill="#5b8bc0" stroke="#2f5377" strokeWidth="1.300" /><path d="M8 3v9l2 2M15 3l1 8-2 3" stroke="#20405f" fill="none" strokeWidth="1.200" /></g>,
  ms: <g><path d="M2 1c8 1 14 3 21 9L2 20c4-6 3-13 0-19z" fill="#5b8bc0" stroke="#3d6591" /><path d="M8 2c3 6 2 10-1 15M13 4c3 4 2 8-1 11M18 6c1 3 1 4-1 6" stroke="#2f5377" strokeWidth="1" fill="none" /></g>,
  ora: <rect x="1.500" y="4" width="21" height="15" rx="6" fill="#6b97cc" stroke="#2a4568" strokeWidth="2" />,
  db2: <g><rect x="0" y="0" width="24" height="24" rx="2" fill="#6391c4" /><text x="2" y="15.500" fontFamily="Open Sans, sans-serif" fontSize="9.500" textLength="20" fill="#fff">DB2</text></g>,
  earth: <Earth />,
  editing: <g transform="rotate(8 12 12)"><path d="M16 1l5 3-7 14-6 4-1-7z" fill="#8db58d" stroke="#446b55" /><path d="M6 10L17 3M5 14l14-8M8 18l9-6" stroke="#4a6c92" strokeWidth="1.500" opacity=".7" /><path d="M8 20l-1 4 3-3z" fill="#456" /></g>,
  tiles: <g><rect x="1" y="1" width="22" height="22" fill="#fff" /><path d="M1 1h7v7H1zM13 1h6v6h-6zM7 12h6v6H7zM18 12h5v6h-5zM1 17h6v6H1z" fill="#27394d" /><path d="M8 1h5v7H8zM1 8h6v5H1zM13 12h5v6h-5z" fill="#a5c3e4" /><path d="M13 7h6v5h-6zM7 18h6v5H7z" fill="#8ab0d8" /></g>,
  dotl: <circle cx="12" cy="12" r="4.500" fill="#dfae30" stroke="#444" strokeWidth="1.300" />,
  buf: <path d="M1.500 22V7q0-5 6-5h14.500v7H10q-1.500 0-1.500 2v11z" fill="#667b78" stroke="#54708a" strokeWidth="2" />,
  gdal: <g><circle cx="14" cy="13" r="8.500" fill="#45b0da" stroke="#1e6286" /><path d="M10 8l5-2 3 4-4 4-4-1z" fill="#3a8f4a" /><path d="M3 6l10-4M5 1l5 6" stroke="#444" strokeWidth="2" /><text x="-1" y="23.500" fontFamily="Open Sans, sans-serif" fontWeight="800" fontSize="9.500" textLength="25" fill="#111" stroke="#fff" strokeWidth="1.500" paintOrder="stroke">GDAL</text></g>,
  grass: <g><path d="M12 1l9.500 10.500L12 21l-9.500-9.500z" fill="#fff" stroke="#444" strokeWidth="1.200" strokeDasharray="2 .6" /><path d="M4 15l8 7.500L20 15M4 18l7 5M3 23.500h18" stroke="#777" fill="none" /><path d="M12 19L6.500 9.500l4.500 5 1-10 1.500 10 4-5z" fill="#2bb02b" stroke="#3fa83f" strokeWidth=".6" /></g>,
  saga: <g fill="none" stroke="#12549a" strokeWidth="2.500"><path d="M18.500 3.500A10.500 10.500 0 1022.500 13H15l4.500 5.500M21.500 4.500L4.500 12.500l9.500 9M10 10.500l4.500 4" /></g>,
};

/* ---------- toolbars ---------- */
const Shell = styled.div`width: 1366px; height: 768px; display: flex; flex-direction: column; background: #f0f0f0; overflow: hidden;`;
const TitleBar = styled.div`height: 23px; flex: none; background: #fff; display: flex; align-items: center; padding: 0 1px 0 2px;`;
const TitleText = styled.div`margin-left: 4px; flex: 1; display: flex;`;
const WinBtn = styled.div`width: 46px; height: 21px; display: flex; align-items: center; justify-content: center;`;
const MenuBar = styled.div`height: 20px; flex: none; display: flex; align-items: center; padding: 0 0 0 10px; background: #f0f0f0; border-bottom: 1px solid #d0d0d0;`;
const MenuItem = styled.div`margin-right: ${(p) => p.$gap}px; display: flex;`;
const Bar = styled.div`height: ${(p) => p.$h || 39}px; flex: none; display: flex; align-items: center; background: linear-gradient(#fbfbfb, #ededed); border-bottom: 1px solid #b2b2b2;`;
const GripBox = styled.div`
  flex: none; width: 5px; height: 17px; margin-left: ${(p) => p.$l}px; margin-right: ${(p) => p.$r}px;
  background-image: linear-gradient(#a9a9a9 1px, transparent 1px 3px);
  background-size: 3px 3px;
  mask-image: linear-gradient(90deg, #000 1px, transparent 1px 3px, #000 3px 4px, transparent 4px);
`;
const Grip = ({ l = 5, r = 2.5 }) => <GripBox $l={l} $r={r} />;
const ToolBox = styled.div`
  flex: none; width: ${(p) => p.$w}px; height: 31px; display: flex; align-items: center; justify-content: center;
  ${(p) => p.$on && css`width: 31px; margin: 0 0.95px; background: #dcdcdc; border: 1px solid #b4b4b4; border-radius: 2px;`}
`;
const T = ({ i, w = 32.9, on, off }) => <ToolBox $w={w} $on={on}><Ico off={off}>{I[i]}</Ico></ToolBox>;
const ArrowBox = styled.div`flex: none; width: ${(p) => p.$w}px; display: flex; justify-content: center; opacity: ${(p) => (p.$off ? 0.5 : 1)};`;
const Arr = ({ w = 12.1, off }) => <ArrowBox $w={w} $off={off}><svg width="8" height="5"><path d="M.3 0h7.400L4 4.300z" fill="#555" /></svg></ArrowBox>;
const Sep = styled.div`flex: none; width: 1px; height: ${(p) => p.$h || 20}px; background: #cfcfcf; margin: 0 ${(p) => p.$r}px 0 ${(p) => p.$l}px;`;
const MoreBox = styled.div`flex: none; width: ${(p) => p.$w}px; display: flex; justify-content: center; padding-left: 3px;`;
const More = ({ w }) => <MoreBox $w={w}><svg width="9" height="7"><path d="M1 .5l3 3-3 3M5 .5l3 3-3 3" fill="none" stroke="#333" strokeWidth="1.200" /></svg></MoreBox>;

const Field = styled.div`
  flex: none; width: ${(p) => p.$w}px; height: ${(p) => p.$h || 22}px; margin-left: ${(p) => p.$l || 0}px; display: flex; align-items: center;
  background: #fff; border: 1px solid #b0b0b0; border-radius: 3px; padding-left: ${(p) => p.$pl ?? 4}px; overflow: hidden;
`;
const Grow = styled.div`flex: 1;`;
const SpinBtns = styled.div`width: 14px; height: 100%; border-left: 1px solid #b8b8b8; background: linear-gradient(#fff, #eee); display: flex; flex-direction: column; align-items: center; justify-content: center; gap: 3px;`;
const Spin = () => <SpinBtns><svg width="7" height="4"><path d="M0 4h7L3.500 0z" fill="#555" /></svg><svg width="7" height="4"><path d="M0 0h7L3.500 4z" fill="#555" /></svg></SpinBtns>;
const DropBtn = styled.div`width: 20px; height: 100%; border-left: ${(p) => (p.$line ? "1px solid #b8b8b8" : "0")}; display: flex; align-items: center; justify-content: center;`;

/* ---------- docks ---------- */
const Work = styled.div`height: 542px; flex: none; display: flex;`;
const Side = styled.div`flex: none; width: 256px; display: flex; flex-direction: column; margin-left: ${(p) => p.$l || 0}px;`;
const DockHead = styled.div`height: 22px; flex: none; display: flex; align-items: center; padding: 0 ${(p) => p.$pr}px 0 4px; gap: 3px;`;
const DockBtn = ({ x }) => (
  <svg width="11" height="11" viewBox="0 0 11 11"><rect x=".5" y=".5" width="10" height="10" rx="2" fill="#e8e8e8" stroke="#777" />
    {x ? <path d="M3 3l5 5M8 3L3 8" stroke="#555" strokeWidth="1.900" /> : <path d="M4.500 4.500v-2h4v4h-2M2.500 4.500h4v4h-4z" fill="none" stroke="#666" />}</svg>
);
const DockTools = styled.div`height: 29px; flex: none; display: flex; align-items: center; padding: 0 0 ${(p) => p.$pb}px 3.5px;`;
const DT = ({ i, w = 25, s = 16 }) => <ToolBox $w={w}><Ico s={s}>{I[i]}</Ico></ToolBox>;
const Frame = styled.div`flex: none; height: ${(p) => p.$h}px; display: flex; background: #fff; border: 1px solid #b2b2b2; overflow: hidden;`;
const Rows = styled.div`flex: 1; min-width: 0; overflow: hidden; padding-top: ${(p) => p.$pt || 0}px;`;
const LayerClip = styled.div`height: 201px; overflow: hidden; padding-top: 1px;`;
const Corner = styled.div`flex: none; height: 14px; background: #f0f0f0; border-top: 1px solid #b8b8b8;`;
const Row = styled.div`
  height: ${(p) => p.$h || 18}px; display: flex; align-items: center; padding-left: ${(p) => p.$pl || 0}px; white-space: pre;
  background: ${(p) => (p.$sel ? "#efefef" : "transparent")}; color: ${(p) => (p.$dim ? "#9a9a9a" : "#000")};
`;
const Twist = styled.div`flex: none; width: 20px; display: flex; justify-content: center;`;
const Tw = ({ k }) => <Twist>{k && <svg width="8" height="8">{k === "r" ? <path d="M2 0l4.500 4L2 8z" fill="#666" /> : <path d="M0 2h8L4 6.200z" fill="#555" />}</svg>}</Twist>;
const IconCell = styled.div`flex: none; width: 22px; display: flex; align-items: center;`;
const VBar = styled.div`flex: none; width: 14px; border-left: 1px solid #b8b8b8; background: #e2e2e2; display: flex; flex-direction: column;`;
const HBar = styled.div`flex: none; height: 14px; border-top: 1px solid #b8b8b8; background: #e2e2e2; display: flex;`;
const SBtn = styled.div`flex: none; width: 13px; height: 13px; background: #f7f7f7; display: flex; align-items: center; justify-content: center;`;
const Thumb = styled.div`
  flex: none; background: linear-gradient(${(p) => (p.$hz ? "180deg" : "90deg")}, #f3f3f3, #fff); border: 0 solid #b8b8b8;
  ${(p) => (p.$hz ? css`width: ${p.$s}px; border-width: 0 1px;` : css`height: ${p.$s}px; border-width: 1px 0;`)}
`;
const arrows = { u: "M0 6h8L4 2z", d: "M0 2h8L4 6z", l: "M6 0v8L2 4z", r: "M2 0v8l4-4z" };
const SA = ({ d }) => <svg width="8" height="8"><path d={arrows[d]} fill="#444" /></svg>;
const Check = styled.div`flex: none; width: 14px; height: 14px; border: 1px solid #b5b5b5; background: #fff; display: flex; align-items: center; justify-content: center;`;
const Tick = () => <svg width="10" height="10"><path d="M1.500 5l2.500 3.500L8.500 1" fill="none" stroke="#000" strokeWidth="1.900" /></svg>;
const Swatch = styled.div`width: 16px; height: 16px; background: ${(p) => p.$c}; border: 1px solid #4a4a4a;`;
const Line = styled.div`width: 16px; height: 2px; background: ${(p) => p.$c};`;
const LayerName = styled.div`
  display: flex; font-size: 11.5px; font-weight: 700;
  ${(p) => p.$dim && css`color: #858585; font-style: italic; font-weight: 700; font-size: 12px;`}
  ${(p) => p.$ul && css`${Text} { text-decoration: underline; text-underline-offset: 2px; }`}
`;
const SplitDots = styled.div`height: 5px; flex: none; display: flex; justify-content: center; align-items: flex-start; padding-top: 2px;`;
const MapFrame = styled.div`flex: none; width: 842px; height: 541px; margin-left: 6px; margin-top: 1px; border: 1px solid #b2b2b2; background: #fff; overflow: hidden;`;
const Status = styled.div`height: 26px; flex: none; display: flex; align-items: center; padding: 3px 0 0 4px;`;
const Clip = styled.div`width: ${(p) => p.$w}px; margin-left: ${(p) => p.$l || 0}px; overflow: hidden; flex: none; display: flex; height: 18px; align-items: center;`;
const Pad = styled.div`margin-left: ${(p) => p.$l}px; flex: none; display: flex; align-items: center; color: ${(p) => p.$c || "inherit"};`;
const TaskEdge = styled.div`height: 2px; flex: none; background: linear-gradient(90deg, #3c3c3c 0 48px, #cfcfcf 48px 392px, #3f3f3f 392px);`;

const menus = [["P", "r", "ogetto", 46], ["", "M", "odifica", 47], ["", "V", "isualizza", 50], ["", "L", "ayer", 28], ["", "I", "mpostazioni", 68], ["", "P", "lugins", 39], ["Vett", "o", "re", 37], ["", "R", "aster", 32], ["", "D", "atabase", 48], ["", "W", "eb", 24], ["", "M", "esh", 29], ["MMQGIS", "", "", 48], ["Pro", "c", "essing", 57], ["", "G", "uida", 31]];

const browser = [["", "star", "Preferiti", 41], ["r", "bm", "Segnalibri Spaziali", 94], ["r", "prj", "Home del progetto", 101], ["r", "homef", "Home", 33], ["r", "dir", "C:\\", 16], ["", "box", "GeoPackage", 65], ["", "feather", "SpatiaLite", 51], ["", "pg", "PostGIS", 40], ["", "ms", "MSSQL", 38], ["", "ora", "Oracle", 34], ["", "db2", "DB2", 21], ["r", "earth", "WMS/WMTS", 67]];

const layers = [
  { on: 1, line: "#cdb9b0", n: "coastline", w: 49 }, { on: 1, ic: "editing", n: "Allplotindici_3035_con dateok", w: 165, ul: 1 },
  { on: 1, line: "#c9aea2", n: "middle300_bis", w: 79 }, { on: 1, sw: "#ff9e17", n: "patches300_bis", w: 84 },
  { sw: "#e15989", n: "Landcover2019_all_3035_corrG", w: 175, dim: 1 }, { on: 1, sw: "#7d8b8f", n: "bndr300_bis", w: 67 },
  { ic: "dotl", n: "Allplotindici_3003_con dateok", w: 171, dim: 1 }, { on: 1, line: "#efdca6", n: "costa_fisica_anno2010_3035_cln", w: 176 },
  { sw: "#bdcf50", n: "Landcover2019_all_3003_corrG", w: 175, dim: 1 }, { tw: "d", ic: "tiles", n: "OFC 2019 20cm - 32 bit colore -", w: 176, dim: 1 },
  { tw: "d", ic: "tiles", n: "Google Satellite", w: 90, dim: 1 }, { sw: "#fff", n: "" },
];

const tools = [
  [0, "Q", "Geometria vettore", 95], [1, "buf", "Buffer", 32], [1, "gear", "Buffer conici", 67], [1, "gear", "Buffer larghezza variabile (valore ...", 182], [1, "gear", "Buffer lato singolo", 97], [1, "gear", "Buffer multi-anello (distanza cost...", 184], [1, "gear", "Crea buffer a spicchi", 108], [1, "gear", "Rettangoli, ovali, diamanti", 138],
  [0, "gdal", "GDAL", 30], ["g", "", "Geoprocessing vettoriale", 130], [2, "gdal", "Buffer su singolo lato", 112], [2, "gdal", "Crea buffer", 59, "sel"],
  [0, "grass", "GRASS", 35], ["g", "", "Raster (r.*)", 55], [2, "grass", "r.buffer", 39], [2, "grass", "r.buffer.lowmem", 89], ["g", "", "Vettore (v.*)", 62], [2, "grass", "v.buffer", 41],
  [0, "saga", "SAGA", 30, "dim"], ["g", "", "Features - Tools", 82, "dim"], [2, "saga", "Features Buffer", 79, "dim"], ["g", "", "Raster - Tools", 70, "dim"], [2, "saga", "Buffer Soglia", 67, "dim"], [2, "saga", "Raster Buffer", 67, "dim"], [2, "saga", "Raster Proximity Buffer", 121, "dim"],
];

const G = "#7d8b8f", O = "#ff9e17";
function MapView() {
  return (
    <svg width="840" height="539" viewBox="263 200 840 539" strokeLinejoin="round">
      <g stroke="#232323" strokeWidth="1">
        <path fill={G} d="M452.500 199L467 234 474 247 480 257 498.500 263 515 254.500 520 258.500 521 262 761.500 251.300 761 234 758 216 754 199z" />
        <path fill={O} d="M521 261.500L761.500 251.300V269L558 395 534 357 524 329 509 304 505 284 493 279.500 505 272 521 264.500z" />
        <path fill={G} d="M761.500 269L780 298 796 330 811 366 821 393 595 474 569 413 558 395z" />
        <path fill={O} d="M595 474L821 393 828 413 833 437 837 470 840.500 493 603.500 531.500z" />
        <path fill={G} d="M603.500 531.500L840.500 493 843.500 510 607 553z" />
        <path fill={O} d="M607 553L843.500 510 848 532 854 555 638 664 626 640 612 582z" />
        <path fill={G} d="M638 664L854 555 857 562 880 605 912 672 943 741H678z" />
      </g>
      <g fill="none" stroke="#2a220f" strokeWidth="1.100">
        <path d="M540.300 261v6l4 10v6.500l15 3.500 16.500 30 9.200 31 20 10 1.700 6" />
        <path d="M595.500 258.700L615 289.700 630.700 314l9.300 10 1 5 5 11" />
        <path d="M661.300 256v47l7.400 22" />
        <path d="M674.300 255l2.400 6-.7 5-7 1.500v3.500l10 6 4.300 6v9.500l8 8.500 3 9" />
        <path d="M715 253.300l9.700 37.400M724 253l9.300 10L743 279" />
        <path d="M638.500 458.700l-2 6.300 3.500 19 6.700 17 12 20" />
        <path d="M728.700 511v-5l-2-9 1.300-20 5.300-16 6.400 16.700-5 19 3 12.300" />
        <path d="M784.700 406.500l3.600 3.500 6.700-3.300 9.300-7.500M800 499l-7.300-4.700-1-7.600 2.600-2L820 488.300l13.300 5.700" />
        <path d="M662.300 543.700l3.700 25 1.500 18 4.500 25 6.700 24.300 3.600 4.700" />
        <path d="M728.300 532v5l6.700 2.700 7.700-2.400 4-9.300M735 614.300l-2-41-5.700-34 21.400 68M827.700 513.700l19.600 24 3.400 17.500" />
      </g>
      <g fill="none">
        <path d="M625 199l6 11 5 14 4 21 1 17-2 29 6 15 15 25 16 27 32 75 4 16 3 21 7 42 3 20 3 19 14 52 4 8 23 42 15 30 27 57" stroke="#98532f" strokeWidth="1" />
        <path d="M452.500 199L467 234 474 247 480 257 498.500 263 515 254.500 520 258.500 521 264.500 505 272 493 279.500 505 284 509 304 524 329 534 357 558 395 569 413 595 474 603.500 531.500 612 582 626 640 638 664 678 741" stroke="#8c6255" strokeWidth="1.300" />
        <path d="M470 241q2 19 10 20t17 2M520 260q1 7-12 8-10 3-14 12l10 10" stroke="#e5c25c" strokeWidth="1.100" />
      </g>
      <circle cx="596" cy="313" r="3.700" fill="#ffff20" stroke="#232323" /><path d="M592.500 309.500l7 7M599.500 309.500l-7 7" stroke="#e03020" />
      <circle cx="705" cy="474" r="3.800" fill="#7cb26b" stroke="#232323" /><circle cx="716" cy="576" r="3.800" fill="#7cb26b" stroke="#232323" />
      <text y="329" fontFamily="Open Sans, sans-serif" fontWeight="700" fontSize="27">
        <tspan x="373" textLength="15" lengthAdjust="spacingAndGlyphs">7</tspan>
        <tspan x="388" textLength="15.500" lengthAdjust="spacingAndGlyphs">_</tspan>
        <tspan x="404" textLength="70" lengthAdjust="spacingAndGlyphs">Rosig</tspan>
        <tspan x="474" textLength="15.500" lengthAdjust="spacingAndGlyphs">_</tspan>
        <tspan x="490" fontFamily="Lato, sans-serif" textLength="16" lengthAdjust="spacingAndGlyphs">1</tspan>
      </text>
    </svg>
  );
}

export default function App() {
  return (
    <Shell>
      <Global />
      <TitleBar>
        <QLogo s={17} />
        <TitleText><Label w={212}>*Nuovo_DuneToscana 28102021 — QGIS</Label></TitleText>
        <WinBtn><svg width="10" height="10"><path d="M0 5.500h10" stroke="#000" /></svg></WinBtn>
        <WinBtn><svg width="10" height="10"><path d="M.5 2.500h7v7h-7zM2.500 2.500v-2h7v7h-2" fill="none" stroke="#000" /></svg></WinBtn>
        <WinBtn><svg width="11" height="11"><path d="M.5.5l10 10M10.500.5l-10 10" stroke="#000" strokeWidth="1.100" /></svg></WinBtn>
      </TitleBar>
      <MenuBar>{menus.map(([a, b, c, w]) => <MenuItem key={a + b + c} $gap={14}><Label w={w}>{a}<u>{b}</u>{c}</Label></MenuItem>)}</MenuBar>

      <Bar>
        <Grip />{["doc", "folder", "save", "layoutNew", "layoutMgr", "style"].map((i) => <T key={i} i={i} />)}
        <Grip l={21} r={3.6} /><T i="hand" /><T i="pan" /><T i="zin" on /><T i="zout" /><T i="zfull" /><T i="zsel" /><T i="zlay" /><T i="z11" off /><T i="zlast" /><T i="znext" off /><T i="newmap" /><T i="new3d" /><Pad $l={1} /><T i="bmnew" /><T i="bm" /><T i="clock" />
        <More w={28} /><Grip l={1} r={3.2} /><T i="ident" /><T i="table" /><T i="abacus" /><T i="gear" on /><T i="sigma" /><T i="measure" /><Arr /><T i="tip" /><T i="action" /><Arr /><T i="textann" /><Arr w={11} />
      </Bar>
      <Bar>
        <Grip />{["dsm", "gpkg", "shp", "spl", "mem"].map((i) => <T key={i} i={i} />)}<Sep $l={4} $r={2.5} /><T i="virt" /><Sep $l={4} $r={0} />
        <Grip l={11.5} r={2.5} /><T i="pencils" /><T i="pencil" on /><T i="saveoff" off /><T i="addpt" /><T i="vertex" /><Arr /><T i="multi" /><T i="trash" /><T i="cut" /><T i="copy" /><T i="paste" /><T i="undo" off /><T i="redo" off />
        <Grip l={9} r={2} /><T i="tag" /><T i="pie" /><Sep $l={4} $r={2} /><T i="tagpin" /><T i="tagred" /><Sep $l={5} $r={2.5} />{["tagp", "tageye", "tagarr", "tagrot", "tagedit"].map((i) => <T key={i} i={i} off />)}
        <Grip l={8.5} r={2.5} /><T i="wms" /><T i="wmsz" /><T i="bino" /><Grip l={8.5} r={3} /><T i="py" /><T i="layers3" w={35} /><Grip l={6} r={3} /><T i="help" /><Grip l={9} r={0} />
      </Bar>
      <Bar>
        <Grip /><T i="arc" off /><T i="cad" off /><T i="movept" /><Arr /><Pad $l={0.6} /><T i="rotf" /><T i="simp" off /><T i="ring" off /><T i="part" /><T i="ring" off /><T i="ringdel" off /><T i="partdel" /><T i="reshape" off /><T i="offset" off /><T i="vrefresh" off /><T i="vcross" off /><Pad $l={0.6} /><T i="split" off /><T i="split" off /><Pad $l={0.6} /><T i="merge" /><T i="mergeattr" w={34} /><T i="rotsym" /><Arr w={11} /><T i="trim" />
        <Grip l={9} r={2.5} /><T i="magnet" on /><Pad $l={0.5} /><T i="snapall" /><T i="snapv" on />
        <Field $w={81}><Label w={12}>12</Label><Grow /><Spin /></Field><Field $w={88} $l={1} $pl={3}><Label w={12}>px</Label><Grow /><DropBtn><Arr /></DropBtn></Field>
        <Pad $l={1.5} /><T i="topo" /><T i="overlap" /><T i="inter" w={32.4} /><T i="trace" w={32.4} /><Arr /><T i="selfsnap" />
      </Bar>
      <Bar $h={38}>
        <Grip />{["sarc", "scirc", "sell", "srect", "spoly"].map((i) => <React.Fragment key={i}><T i={i} off /><Arr off /></React.Fragment>)}
        <Grip l={18} r={3} />{["select", "selval", "desel"].map((i) => <React.Fragment key={i}><T i={i} /><Arr /></React.Fragment>)}<More w={32} />
        <Grip l={0} r={2.5} /><T i="grid" /><T i="pix" /><T i="leaf" /><T i="emm" /><T i="reddot" /><T i="infob" /><Grip l={10} r={2} /><T i="stack" /><Grip l={8} r={2.5} /><T i="heat" />
      </Bar>

      <Work>
        <Side>
          <DockHead $pr={2}><Label w={42}>Browser</Label><Grow /><DockBtn /><DockBtn x /></DockHead>
          <DockTools $pb={4}><DT i="addsq" /><DT i="refresh" /><DT i="funnel" /><DT i="collapse" w={26} /><DT i="info" w={23} /></DockTools>
          <Frame $h={218}>
            <Rows $pt={1}>{browser.map(([k, i, n, w]) => <Row key={n}><Tw k={k} /><Pad $l={3} /><IconCell><Ico s={16}>{I[i]}</Ico></IconCell><Label w={w}>{n}</Label></Row>)}</Rows>
            <VBar><SBtn><SA d="u" /></SBtn><Thumb $s={114} /><Grow /><SBtn><SA d="d" /></SBtn></VBar>
          </Frame>
          <SplitDots><svg width="18" height="2"><path d="M0 1h18" stroke="#999" strokeDasharray="1 2" /></svg></SplitDots>
          <DockHead $pr={2}><Label w={28}>Layer</Label><Grow /><DockBtn /><DockBtn x /></DockHead>
          <DockTools $pb={4}><DT i="brush" /><DT i="addgrp" /><DT i="eye" /><DT i="funnel" w={24} /><DT i="eps" w={27} /><Arr w={10} /><DT i="expand" w={27} /><DT i="collapse" w={24} /><DT i="rmsq" w={24} /></DockTools>
          <Frame $h={217}>
            <Rows>
              <LayerClip>
                {layers.map((l, i) => (
                  <Row key={i} $sel={l.ul}><Tw k={l.tw} /><Pad $l={3} /><Check>{l.on && <Tick />}</Check><Pad $l={6} />
                    <IconCell>{l.sw && <Swatch $c={l.sw} />}{l.line && <Line $c={l.line} />}{l.ic && <Ico s={16}>{I[l.ic]}</Ico>}</IconCell>
                    <LayerName $dim={l.dim} $ul={l.ul}>{l.n && <Label w={l.w}>{l.n}</Label>}</LayerName></Row>
                ))}
              </LayerClip>
              <HBar><SBtn><SA d="l" /></SBtn><Thumb $hz $s={188} /><Grow /><SBtn><SA d="r" /></SBtn></HBar>
            </Rows>
            <VBar><SBtn><SA d="u" /></SBtn><Thumb $s={150} /><Grow /><SBtn><SA d="d" /></SBtn><Corner /></VBar>
          </Frame>
        </Side>

        <MapFrame><MapView /></MapFrame>

        <Side $l={6}>
          <DockHead $pr={2}><Label w={125}>Strumenti di Processing</Label><Grow /><DockBtn /><DockBtn x /></DockHead>
          <DockTools $pb={4}><DT i="gears" /><DT i="pysm" /><DT i="clock" /><DT i="rep" /><Sep $l={4} $r={2} $h={12} /><DT i="note" w={24} /><Sep $l={4} $r={3} $h={12} /><DT i="wrench" /></DockTools>
          <Field $w={256} $pl={8}>
            <svg width="13" height="13"><circle cx="5.500" cy="5.500" r="4.500" fill="none" stroke="#888" strokeWidth="1.300" /><path d="M9 9l3.500 3.500" stroke="#888" strokeWidth="1.300" /></svg>
            <Pad $l={6}><Label w={21}>buff</Label></Pad><Grow />
            <svg width="14" height="10"><path d="M4 0h8q1.500 0 1.500 1.500v7Q13.500 10 12 10H4L0 5z" fill="#888" /><path d="M5 2.500l5 5M10 2.500l-5 5" stroke="#fff" strokeWidth="1.200" /></svg><Pad $l={7} />
          </Field>
          <Frame $h={469}>
            <Rows $pt={1}>
              {tools.map(([lv, i, n, w, f], k) => {
                if (lv === "g") return <Row key={k} $h={15} $pl={20} $dim={f === "dim"}><Tw k="d" /><Pad $l={3} /><Label w={w}>{n}</Label></Row>;
                return (
                  <Row key={k} $sel={f === "sel"} $dim={f === "dim"} $pl={[0, 20, 40][lv]}>
                    <Tw k={lv === 0 ? "d" : ""} /><Pad $l={3} />
                    <IconCell>{i === "Q" ? <QLogo s={15} /> : <Ico s={i === "gear" ? 15 : 16}>{I[i]}</Ico>}</IconCell><Label w={w}>{n}</Label>
                  </Row>
                );
              })}
            </Rows>
          </Frame>
        </Side>
      </Work>

      <Status>
        <Field $w={253} $pl={9}>
          <svg width="13" height="13"><circle cx="5.500" cy="5.500" r="4.500" fill="none" stroke="#888" strokeWidth="1.300" /><path d="M9 9l3.500 3.500" stroke="#888" strokeWidth="1.300" /></svg>
          <Pad $l={5} $c="#777"><Label w={141}>Digita per localizzare (Ctrl+K)</Label></Pad>
        </Field>
        <Clip $w={213} $l={8}><Label w={217}>1 elementi selezionati sul layer Allplotindici_30</Label></Clip>
        <Pad $l={8}><Label w={54}>Coordinata</Label></Pad>
        <Field $w={103} $l={3} $pl={6}><Label w={88}>4356686,2252293</Label></Field>
        <Pad $l={4}><svg width="16" height="16" viewBox="0 0 16 16"><g fill="#ddd" stroke="#333" strokeWidth="1.200"><path d="M2 3l4-2 5 4 1 3 3 3-3 4-4-1-6-6z" /><ellipse cx="4.500" cy="4" rx="3" ry="2.200" /><ellipse cx="8" cy="7" rx="3" ry="2" transform="rotate(45 8 7)" /><path d="M3 8l5 6M11 4l4-3" /><circle cx="10" cy="12" r="2.300" /></g></svg></Pad>
        <Pad $l={12}><Label w={26}>Scala</Label></Pad>
        <Field $w={82} $l={3} $pl={3}><Label w={35}>1:4705</Label><Grow /><DropBtn $line><Arr /></DropBtn></Field>
        <Pad $l={11}><svg width="12" height="15"><path d="M2.500 7V4.500a3.500 3.500 0 017 0V7" fill="none" stroke="#888" strokeWidth="1.600" /><rect x="0" y="7" width="12" height="8" rx="1.500" fill="#5a5a5a" /></svg></Pad>
        <Pad $l={8}><Label w={107}>Lente d'ingrandimento</Label></Pad>
        <Field $w={84} $l={3}><Label w={29}>100%</Label><Grow /><Spin /></Field>
        <Pad $l={8}><Label w={49}>Rotazione</Label></Pad>
        <Field $w={84} $l={9}><Label w={26}>0.0 °</Label><Grow /><Spin /></Field>
        <Pad $l={6}><Check><Tick /></Check></Pad>
        <Pad $l={5}><Label w={45}>Visualizza</Label></Pad>
        <Pad $l={16}><svg width="15" height="15" viewBox="0 0 24 24"><path d="M12 -1l13 13-13 13L-1 12z" fill="#bbb" stroke="#888" /><Globe r={9.5} c="#ddd" f="#555" k="#555" /></svg></Pad>
        <Pad $l={1}><Label w={54}>EPSG:3035</Label></Pad>
        <Pad $l={22}><svg width="17" height="15"><path d="M8.500 0C13 0 17 2.500 17 6.500c0 3-2 4.500-3 5.300l2 3.200-5-2C4 14 0 10.500 0 6.500S4 0 8.500 0z" fill="#5a5a5a" /><circle cx="4.500" cy="6.500" r="1.300" fill="#fff" /><circle cx="8.500" cy="6.500" r="1.300" fill="#fff" /><circle cx="12.500" cy="6.500" r="1.300" fill="#fff" /></svg></Pad>
      </Status>
      <TaskEdge />
    </Shell>
  );
}
